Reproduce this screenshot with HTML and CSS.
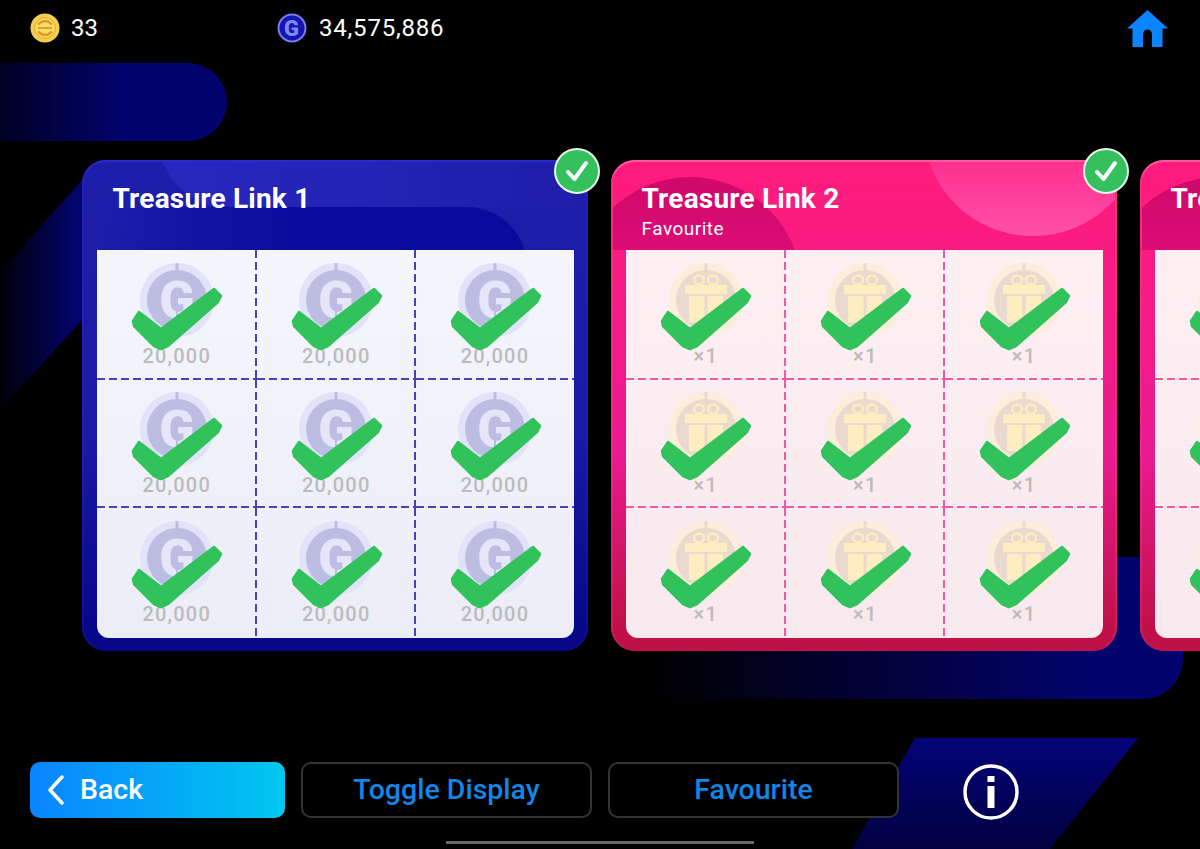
FILE: index.html
```html
<!DOCTYPE html>
<html lang="en">
<head>
  <meta charset="UTF-8">
  <meta name="viewport" content="width=device-width, initial-scale=1.0">
  <title>Treasure Link</title>
  <link rel="stylesheet" href="styles.css">
</head>
<body>

  <!-- shared icons -->
  <svg class="icon-defs" aria-hidden="true">
    <symbol id="coin-g" viewBox="0 0 76 76">
      <circle cx="38" cy="38" r="37" fill="#e2e2f8"/>
      <circle cx="38" cy="38" r="30" fill="#bdbde2"/>
      <rect x="36.5" y="1" width="3" height="8" fill="#bdbde2"/>
      <text x="38" y="56" text-anchor="middle" class="coin-letter" fill="#e6e6fa">G</text>
      <rect x="37" y="30" width="2" height="34" fill="#bdbde2"/>
    </symbol>
    <symbol id="coin-gift" viewBox="0 0 76 76">
      <circle cx="38" cy="38" r="37" fill="#fdeedb"/>
      <circle cx="38" cy="38" r="30" fill="#e9d9cf"/>
      <rect x="36.5" y="1" width="3" height="8" fill="#e9d9cf"/>
      <ellipse cx="31" cy="18" rx="5" ry="4.500" fill="none" stroke="#ffedc2" stroke-width="2.500"/>
      <ellipse cx="45" cy="18" rx="5" ry="4.500" fill="none" stroke="#ffedc2" stroke-width="2.500"/>
      <rect x="17" y="23" width="42" height="9" fill="#ffedc2"/>
      <rect x="21" y="34" width="15.500" height="26" fill="#ffedc2"/>
      <rect x="39.500" y="34" width="15.500" height="26" fill="#ffedc2"/>
    </symbol>
    <symbol id="tick" viewBox="0 0 159 129">
      <path d="M36 72 42 63 64 80 117 40 124 47 121 53 71 97 64 100 57 97 37 77Z" fill="#32c25c" stroke="#32c25c" stroke-width="2.500" stroke-linejoin="round"/>
    </symbol>
    <symbol id="badge" viewBox="0 0 46 46">
      <circle cx="23" cy="23" r="22" fill="#34c05c" stroke="#e8f6ec" stroke-width="2"/>
      <path d="M14 24 20.500 31 32 15" fill="none" stroke="#fff" stroke-width="4" stroke-linecap="round" stroke-linejoin="round"/>
    </symbol>
  </svg>

  <div class="bg-shape bg-bar-top"></div>
  <div class="bg-shape bg-bar-bottom"></div>
  <div class="bg-shape bg-slant-left"></div>
  <div class="bg-shape bg-slant-right"></div>

  <header class="topbar">
    <div class="wallet wallet-coins">
      <svg class="wallet-icon" viewBox="0 0 30 30">
        <circle cx="15" cy="15" r="14.500" fill="#f6d04d"/>
        <circle cx="15" cy="15" r="10.500" fill="#f9dc6c" stroke="#dfa92c" stroke-width="1"/>
        <path d="M8 11.500Q15 4.500 22 11.500M8 18.500Q15 25.500 22 18.500" fill="none" stroke="#d9a026" stroke-width="2.500"/>
        <rect x="8" y="14" width="14" height="2" fill="#d9a026"/>
      </svg>
      <span>33</span>
    </div>
    <div class="wallet wallet-gold">
      <svg class="wallet-icon" viewBox="0 0 30 30">
        <circle cx="15" cy="15" r="13.500" fill="#1414b0" stroke="#7b7bea" stroke-width="2"/>
        <text x="15" y="22.500" text-anchor="middle" class="wallet-letter" fill="#7f88f2">G</text>
      </svg>
      <span>34,575,886</span>
    </div>
    <svg class="home-icon" viewBox="0 0 41 37">
      <path fill-rule="evenodd" d="M20.500 0 41 18.500H35.500V37H5.500V18.500H0ZM16 37V24A4.500 4.500 0 0 1 25 24V37Z" fill="#0a84ff"/>
    </svg>
  </header>

  <main class="card-row">

    <section class="card card-blue">
      <div class="card-art">
        <div class="art-dark"></div>
        <div class="art-light"></div>
      </div>
      <header class="card-head">
        <h2>Treasure Link 1</h2>
      </header>
      <div class="prize-grid">
        <div class="cell"><svg class="coin"><use href="#coin-g"/></svg><span class="amount">20,000</span><svg class="tick"><use href="#tick"/></svg></div>
        <div class="cell"><svg class="coin"><use href="#coin-g"/></svg><span class="amount">20,000</span><svg class="tick"><use href="#tick"/></svg></div>
        <div class="cell"><svg class="coin"><use href="#coin-g"/></svg><span class="amount">20,000</span><svg class="tick"><use href="#tick"/></svg></div>
        <div class="cell"><svg class="coin"><use href="#coin-g"/></svg><span class="amount">20,000</span><svg class="tick"><use href="#tick"/></svg></div>
        <div class="cell"><svg class="coin"><use href="#coin-g"/></svg><span class="amount">20,000</span><svg class="tick"><use href="#tick"/></svg></div>
        <div class="cell"><svg class="coin"><use href="#coin-g"/></svg><span class="amount">20,000</span><svg class="tick"><use href="#tick"/></svg></div>
        <div class="cell"><svg class="coin"><use href="#coin-g"/></svg><span class="amount">20,000</span><svg class="tick"><use href="#tick"/></svg></div>
        <div class="cell"><svg class="coin"><use href="#coin-g"/></svg><span class="amount">20,000</span><svg class="tick"><use href="#tick"/></svg></div>
        <div class="cell"><svg class="coin"><use href="#coin-g"/></svg><span class="amount">20,000</span><svg class="tick"><use href="#tick"/></svg></div>
      </div>
      <svg class="done-badge"><use href="#badge"/></svg>
    </section>

    <section class="card card-pink">
      <div class="card-art">
        <div class="art-dark"></div>
        <div class="art-light"></div>
      </div>
      <header class="card-head">
        <h2>Treasure Link 2</h2>
        <p>Favourite</p>
      </header>
      <div class="prize-grid">
        <div class="cell"><svg class="coin"><use href="#coin-gift"/></svg><span class="amount">×1</span><svg class="tick"><use href="#tick"/></svg></div>
        <div class="cell"><svg class="coin"><use href="#coin-gift"/></svg><span class="amount">×1</span><svg class="tick"><use href="#tick"/></svg></div>
        <div class="cell"><svg class="coin"><use href="#coin-gift"/></svg><span class="amount">×1</span><svg class="tick"><use href="#tick"/></svg></div>
        <div class="cell"><svg class="coin"><use href="#coin-gift"/></svg><span class="amount">×1</span><svg class="tick"><use href="#tick"/></svg></div>
        <div class="cell"><svg class="coin"><use href="#coin-gift"/></svg><span class="amount">×1</span><svg class="tick"><use href="#tick"/></svg></div>
        <div class="cell"><svg class="coin"><use href="#coin-gift"/></svg><span class="amount">×1</span><svg class="tick"><use href="#tick"/></svg></div>
        <div class="cell"><svg class="coin"><use href="#coin-gift"/></svg><span class="amount">×1</span><svg class="tick"><use href="#tick"/></svg></div>
        <div class="cell"><svg class="coin"><use href="#coin-gift"/></svg><span class="amount">×1</span><svg class="tick"><use href="#tick"/></svg></div>
        <div class="cell"><svg class="coin"><use href="#coin-gift"/></svg><span class="amount">×1</span><svg class="tick"><use href="#tick"/></svg></div>
      </div>
      <svg class="done-badge"><use href="#badge"/></svg>
    </section>

    <section class="card card-pink">
      <div class="card-art">
        <div class="art-dark"></div>
      </div>
      <header class="card-head">
        <h2>Treasure Link 3</h2>
      </header>
      <div class="prize-grid">
        <div class="cell"><svg class="coin"><use href="#coin-gift"/></svg><span class="amount">×1</span><svg class="tick"><use href="#tick"/></svg></div>
        <div class="cell"><svg class="coin"><use href="#coin-gift"/></svg><span class="amount">×1</span><svg class="tick"><use href="#tick"/></svg></div>
        <div class="cell"><svg class="coin"><use href="#coin-gift"/></svg><span class="amount">×1</span><svg class="tick"><use href="#tick"/></svg></div>
        <div class="cell"><svg class="coin"><use href="#coin-gift"/></svg><span class="amount">×1</span><svg class="tick"><use href="#tick"/></svg></div>
        <div class="cell"><svg class="coin"><use href="#coin-gift"/></svg><span class="amount">×1</span><svg class="tick"><use href="#tick"/></svg></div>
        <div class="cell"><svg class="coin"><use href="#coin-gift"/></svg><span class="amount">×1</span><svg class="tick"><use href="#tick"/></svg></div>
        <div class="cell"><svg class="coin"><use href="#coin-gift"/></svg><span class="amount">×1</span><svg class="tick"><use href="#tick"/></svg></div>
        <div class="cell"><svg class="coin"><use href="#coin-gift"/></svg><span class="amount">×1</span><svg class="tick"><use href="#tick"/></svg></div>
        <div class="cell"><svg class="coin"><use href="#coin-gift"/></svg><span class="amount">×1</span><svg class="tick"><use href="#tick"/></svg></div>
      </div>
    </section>

  </main>

  <footer class="actions">
    <button class="btn btn-back">
      <svg class="back-arrow" viewBox="0 0 18 32">
        <path d="M15 3 3 16 15 29" fill="none" stroke="#fff" stroke-width="3.500" stroke-linecap="round" stroke-linejoin="round"/>
      </svg>
      Back
    </button>
    <button class="btn btn-outline">Toggle Display</button>
    <button class="btn btn-outline">Favourite</button>
    <svg class="info-icon" viewBox="0 0 56 56">
      <circle cx="28" cy="28" r="26" fill="none" stroke="#fff" stroke-width="3.500"/>
      <rect x="24.500" y="12" width="7" height="6" fill="#fff"/>
      <rect x="24.500" y="22" width="7" height="22" fill="#fff"/>
    </svg>
  </footer>

  <div class="home-indicator"></div>

</body>
</html>
```
FILE: styles.css
```css
html, body {
  margin: 0;
  padding: 0;
}
body {
  position: relative;
  width: 1200px;
  height: 849px;
  overflow: hidden;
  background-color: #000;
  color: #fff;
  font-family: "Roboto", "Liberation Sans", sans-serif;
}
.icon-defs {
  position: absolute;
  width: 0;
  height: 0;
}

/* background shapes */
.bg-shape {
  position: absolute;
}
.bg-bar-top {
  left: 0;
  top: 63px;
  width: 227px;
  height: 78px;
  border-radius: 0 39px 39px 0;
  background: linear-gradient(to right, #000024, #03036e 55%);
}
.bg-bar-bottom {
  left: 600px;
  top: 557px;
  width: 583px;
  height: 142px;
  border-radius: 0 40px 40px 0;
  background: linear-gradient(to right, #000 8%, #03036e 85%);
}
.bg-slant-left {
  left: 0;
  top: 160px;
  width: 200px;
  height: 260px;
  clip-path: polygon(100px 0, 200px 0, 200px 30px, 0 250px, 0 112px);
  background: linear-gradient(to right, #000008, #04047c 45%);
}
.bg-slant-right {
  left: 852px;
  top: 738px;
  width: 286px;
  height: 111px;
  clip-path: polygon(63px 0, 286px 0, 198px 111px, 0 111px);
  background: linear-gradient(to bottom, #03037a, #010140);
}

/* top bar */
.topbar {
  position: relative;
  display: flex;
  align-items: center;
  height: 56px;
  padding: 0 32px 0 30px;
}
.wallet {
  display: flex;
  align-items: center;
  gap: 11px;
  font-size: 24px;
}
.wallet-coins {
  width: 247px;
}
.wallet-gold {
  gap: 12px;
  letter-spacing: 0.8px;
}
.wallet-icon {
  flex: none;
  width: 30px;
  height: 30px;
}
.wallet-letter {
  font-family: "Roboto", sans-serif;
  font-size: 22px;
  font-weight: 900;
}
.home-icon {
  width: 41px;
  height: 37px;
  margin-left: auto;
}

/* cards */
.card-row {
  position: relative;
  display: flex;
  gap: 23px;
  margin-top: 104px;
  padding-left: 82px;
}
.card {
  position: relative;
  flex: none;
  display: flex;
  flex-direction: column;
  width: 506px;
  height: 491px;
  box-sizing: border-box;
  padding: 0 14px 13px 15px;
  border-radius: 24px;
}
.card-blue {
  --line: #4444b8;
  --paper-top: #f4f5fd;
  --paper-bottom: #ecedf6;
  background: linear-gradient(to bottom, #1e1eac, #1a1aa6 55%, #07078a 95%);
  box-shadow: inset 0 2px 0 #2a2ace, inset 2px 0 0 rgba(50, 50, 220, 0.2), inset -2px 0 0 rgba(50, 50, 220, 0.2);
}
.card-pink {
  --line: #ee5aa2;
  --paper-top: #fdeff2;
  --paper-bottom: #f8e9ee;
  background: linear-gradient(to bottom, #ff1c7c, #ea1a90 60%, #c01048 95%);
  box-shadow: inset 0 2px 0 #ff5aa0, inset 2px 0 0 rgba(255, 90, 160, 0.2), inset -2px 0 0 rgba(255, 90, 160, 0.2);
}
.card-art {
  position: absolute;
  left: 2px;
  top: 2px;
  right: 2px;
  height: 88px;
  overflow: hidden;
  border-radius: 22px 22px 0 0;
}
.art-dark, .art-light {
  position: absolute;
}
.card-blue .art-dark {
  left: -60px;
  top: 45px;
  width: 503px;
  height: 120px;
  border-radius: 70px;
  background: linear-gradient(to right, rgba(10, 10, 156, 0) 15%, #0a0a9c 55%);
}
.card-blue .art-light {
  left: 74px;
  top: -60px;
  width: 460px;
  height: 105px;
  border-radius: 0 0 0 70px;
  background: linear-gradient(to right, #2828c0, #1d1da8);
}
.card-pink .art-dark {
  left: -35px;
  top: 15px;
  width: 224px;
  height: 224px;
  border-radius: 50%;
  background: linear-gradient(to bottom, #d0086a, #e0107c 50%);
}
.card-pink .art-light {
  left: 310px;
  top: -146px;
  width: 220px;
  height: 220px;
  border-radius: 50%;
  background: linear-gradient(to bottom, #ff1c80 45%, #ff50a8);
}
.card-head {
  position: relative;
  height: 90px;
  box-sizing: border-box;
  padding: 22px 0 0 15.5px;
}
.card-head h2 {
  margin: 0;
  font-size: 28px;
  line-height: 33px;
  font-weight: 700;
  letter-spacing: 0.2px;
}
.card-head p {
  margin: 3px 0 0;
  font-size: 19px;
  line-height: 22px;
  letter-spacing: 0.5px;
}
.done-badge {
  position: absolute;
  right: -12px;
  top: -12px;
  width: 46px;
  height: 46px;
}

/* prize grid */
.prize-grid {
  flex: 1;
  display: grid;
  grid-template-columns: 159.5px 159.5px 1fr;
  grid-template-rows: 129.5px 128.5px 130px;
  overflow: hidden;
  border-radius: 0 0 12px 12px;
  background: linear-gradient(to bottom, var(--paper-top), var(--paper-bottom));
}
.cell {
  position: relative;
  display: flex;
  flex-direction: column;
  align-items: center;
  padding-top: 11.5px;
  background-image:
    repeating-linear-gradient(to right, var(--line) 0 8px, transparent 8px 12px),
    repeating-linear-gradient(to bottom, var(--line) 0 8px, transparent 8px 12px);
  background-size: 100% 2px, 2px 100%;
  background-position: left bottom, right top;
  background-repeat: no-repeat;
}
.cell:nth-child(n+7) {
  background-size: 0 0, 2px 100%;
}
.cell:nth-child(3n) {
  background-size: 100% 2px, 0 0;
}
.cell:nth-child(9) {
  background-size: 0 0, 0 0;
}
.coin {
  flex: none;
  width: 76px;
  height: 76px;
}
.coin-letter {
  font-family: "Roboto", sans-serif;
  font-size: 52px;
  font-weight: 900;
}
.amount {
  margin-top: 6px;
  font-size: 20px;
  font-weight: 500;
  line-height: 24px;
  letter-spacing: 1.2px;
  color: #bcbcbc;
}
.tick {
  position: absolute;
  left: 0;
  top: -1px;
  width: 159px;
  height: 129px;
}

/* bottom buttons */
.actions {
  position: relative;
  display: flex;
  align-items: flex-start;
  gap: 16px;
  margin-top: 111px;
  padding-left: 30px;
}
.btn {
  height: 56px;
  box-sizing: border-box;
  padding-bottom: 2px;
  border-radius: 10px;
  font-family: inherit;
  font-size: 28.500px;
  font-weight: 500;
}
.btn-back {
  display: flex;
  align-items: center;
  gap: 15px;
  width: 255px;
  padding: 0 0 2px 17px;
  border: none;
  background: linear-gradient(to right, #0a84ff, #00c8f0);
  color: #fff;
}
.back-arrow {
  width: 18px;
  height: 32px;
  margin-top: 2px;
}
.btn-outline {
  width: 291px;
  border: 2px solid #333;
  background: #000;
  color: #1285e8;
}
.info-icon {
  width: 56px;
  height: 56px;
  margin: 2px 0 0 48px;
}
.home-indicator {
  position: absolute;
  left: 446px;
  bottom: 5px;
  width: 308px;
  height: 3px;
  background: #666;
}
```
